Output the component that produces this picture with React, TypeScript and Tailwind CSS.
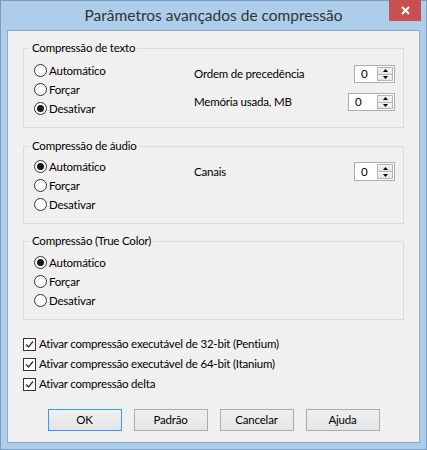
import type { ReactNode } from 'react'

const font = { fontFamily: 'Lato, "Noto Sans", "Liberation Sans", sans-serif' }

function Radio({ label, checked }: { label: string; checked?: boolean }) {
  return (
    <div className="flex h-[19px] items-center">
      <span className="flex h-[13px] w-[13px] items-center justify-center rounded-full border border-[#333] bg-white">
        {checked && <span className="h-[7px] w-[7px] rounded-full bg-[#1a1a1a]" />}
      </span>
      <span className="ml-[2px]">{label}</span>
    </div>
  )
}

function Checkbox({ label }: { label: string }) {
  return (
    <div className="flex h-[20px] items-center">
      <span className="flex h-[13px] w-[13px] items-center justify-center border border-[#333] bg-white">
        <svg width="11" height="11" viewBox="0 0 11 11">
          <path d="M2 5.5 L4.5 8 L9 2.5" fill="none" stroke="#333" strokeWidth="1.3" />
        </svg>
      </span>
      <span className="ml-[3px]">{label}</span>
    </div>
  )
}

function Arrow({ up }: { up?: boolean }) {
  return (
    <svg width="5" height="3" viewBox="0 0 5 3">
      <polygon points={up ? '0,3 5,3 2.5,0' : '0,0 5,0 2.5,3'} fill="#000" />
    </svg>
  )
}

function Spinner({ width, height = 18 }: { width: number; height?: number }) {
  return (
    <div className="flex border border-[#abadb3] bg-white" style={{ width, height }}>
      <span className="flex flex-1 items-center pl-[6px]">0</span>
      <div className="flex w-[17px] flex-col py-px pr-px">
        <div className="flex flex-1 items-center justify-center border border-[#b5b5b5] bg-linear-to-b from-[#f4f4f4] to-[#e6e6e6]">
          <Arrow up />
        </div>
        <div className="flex flex-1 items-center justify-center border border-t-0 border-[#b5b5b5] bg-linear-to-b from-[#f4f4f4] to-[#e6e6e6]">
          <Arrow />
        </div>
      </div>
    </div>
  )
}

function Group({ title, className, children }: { title: string; className: string; children: ReactNode }) {
  return (
    <div className={`relative border border-[#dcdcdc] ${className}`}>
      <span className="absolute left-[6px] top-[-9px] bg-[#f0f0f0] px-[2px] leading-[16px]">{title}</span>
      {children}
    </div>
  )
}

function Button({ label, primary }: { label: string; primary?: boolean }) {
  return (
    <button
      className={`h-[22px] w-[74px] border bg-linear-to-b from-[#f0f0f0] to-[#e5e5e5] ${
        primary ? 'border-[#3399ff]' : 'border-[#acacac]'
      }`}
    >
      {label}
    </button>
  )
}

export default function App() {
  return (
    <div
      className="flex h-[450px] w-[427px] flex-col border border-[#7b9cc2] bg-[#adcdea] text-[11.5px] tracking-[-0.2px] text-black"
      style={font}
    >
      {/* title bar */}
      <div className="grid h-[29px] grid-cols-[1fr_auto_1fr]">
        <div />
        <div className="pt-[4px] text-[15.5px] leading-[20px] tracking-normal text-[#333]">Parâmetros avançados de compressão</div>
        <div className="flex justify-end pr-[5px]">
          <div className="-mt-px flex h-[21px] w-[32px] items-center justify-center bg-[#c75050]">
            <svg width="9" height="9" viewBox="0 0 9 9">
              <path d="M1 1 L8 8 M8 1 L1 8" stroke="#fff" strokeWidth="2" />
            </svg>
          </div>
        </div>
      </div>

      {/* client area */}
      <div className="mx-[6px] mb-[6px] flex flex-1 flex-col border border-[#8da7c6] bg-[#f0f0f0] px-[15px] leading-[16px]">
        <Group title="Compressão de texto" className="mt-[17px] flex pl-[10px] pr-[8px] pt-[12px] pb-[9px]">
          <div className="w-[160px]">
            <Radio label="Automático" />
            <Radio label="Forçar" />
            <Radio label="Desativar" checked />
          </div>
          <div className="flex flex-1 flex-col pt-[4px]">
            <div className="flex h-[18px] items-center justify-between">
              <span>Ordem de precedência</span>
              <Spinner width={41} />
            </div>
            <div className="mt-[10px] flex h-[18px] items-center justify-between">
              <span>Memória usada, MB</span>
              <Spinner width={47} />
            </div>
          </div>
        </Group>

        <Group title="Compressão de áudio" className="mt-[18px] flex pl-[10px] pr-[8px] pt-[10px] pb-[9px]">
          <div className="w-[160px]">
            <Radio label="Automático" checked />
            <Radio label="Forçar" />
            <Radio label="Desativar" />
          </div>
          <div className="flex flex-1 flex-col pt-[5px]">
            <div className="flex h-[19px] items-center justify-between">
              <span>Canais</span>
              <Spinner width={41} height={19} />
            </div>
          </div>
        </Group>

        <Group title="Compressão (True Color)" className="mt-[17px] pl-[10px] pr-[8px] pt-[11px] pb-[9px]">
          <Radio label="Automático" checked />
          <Radio label="Forçar" />
          <Radio label="Desativar" />
        </Group>

        <div className="mt-[14px]">
          <Checkbox label="Ativar compressão executável de 32-bit (Pentium)" />
          <Checkbox label="Ativar compressão executável de 64-bit (Itanium)" />
          <Checkbox label="Ativar compressão delta" />
        </div>

        <div className="mt-[15px] flex justify-center gap-[12px]">
          <Button label="OK" primary />
          <Button label="Padrão" />
          <Button label="Cancelar" />
          <Button label="Ajuda" />
        </div>
      </div>
    </div>
  )
}
